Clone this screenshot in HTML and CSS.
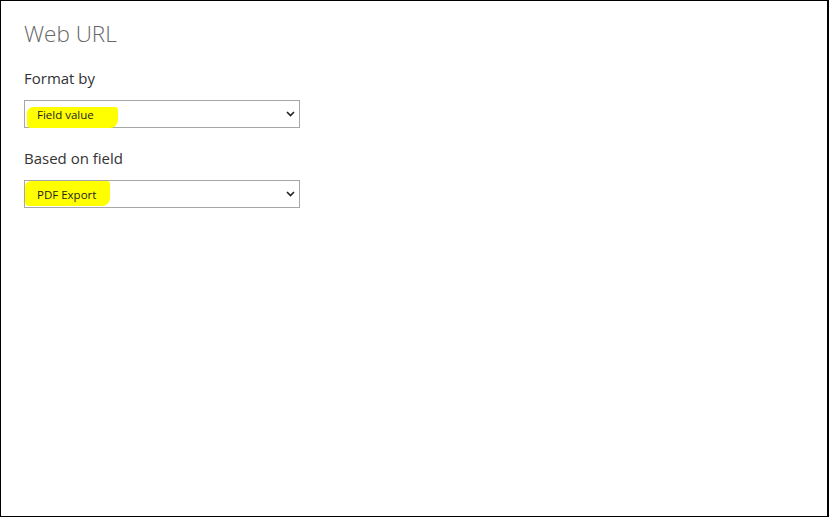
FILE: index.html
```html
<!DOCTYPE html>
<html>
<head>
<meta charset="utf-8">
<link rel="stylesheet" href="styles.css">
</head>
<body>
<div class="frame">
  <h1 class="title">Web URL</h1>
  <div class="field">
    <div class="label">Format by</div>
    <div class="select">
      <span class="mark mark-1"></span>
      <span class="value">Field value</span>
      <svg class="chev" width="9" height="6" viewBox="0 0 9 6"><path d="M1 1 L4.5 4.5 L8 1" fill="none" stroke="#222" stroke-width="1.6"/></svg>
    </div>
  </div>
  <div class="field">
    <div class="label">Based on field</div>
    <div class="select">
      <span class="mark mark-2"></span>
      <span class="value">PDF Export</span>
      <svg class="chev" width="9" height="6" viewBox="0 0 9 6"><path d="M1 1 L4.5 4.5 L8 1" fill="none" stroke="#222" stroke-width="1.6"/></svg>
    </div>
  </div>
</div>
</body>
</html>
```
FILE: styles.css
```css
html, body {
  margin: 0;
  padding: 0;
  background: #fff;
}
.frame {
  box-sizing: border-box;
  width: 829px;
  height: 517px;
  border: 1px solid #000;
  border-right-width: 2px;
  padding: 16px 0 0 23px;
  font-family: "Open Sans", "Noto Sans", sans-serif;
}
.title {
  margin: 0;
  font-weight: 300;
  font-size: 22.5px;
  line-height: 34px;
  color: #666;
}
.field {
  margin-top: 16px;
}
.field + .field {
  margin-top: 19px;
}
.label {
  font-size: 15px;
  line-height: 22px;
  color: #333;
}
.select {
  position: relative;
  box-sizing: border-box;
  margin-top: 11px;
  width: 276px;
  height: 28px;
  border: 1px solid #a6a6a6;
  display: flex;
  align-items: center;
  padding-left: 12px;
}
.value {
  position: relative;
  font-size: 11.5px;
  color: #222;
}
.mark {
  position: absolute;
  background: #ffff00;
  border-radius: 6px 3px 8px 4px;
}
.mark-1 {
  left: 2px;
  top: 6px;
  width: 91px;
  height: 21px;
}
.mark-2 {
  left: 0px;
  top: 0px;
  width: 85px;
  height: 25px;
}
.chev {
  position: absolute;
  right: 4px;
  top: 10px;
}
```
